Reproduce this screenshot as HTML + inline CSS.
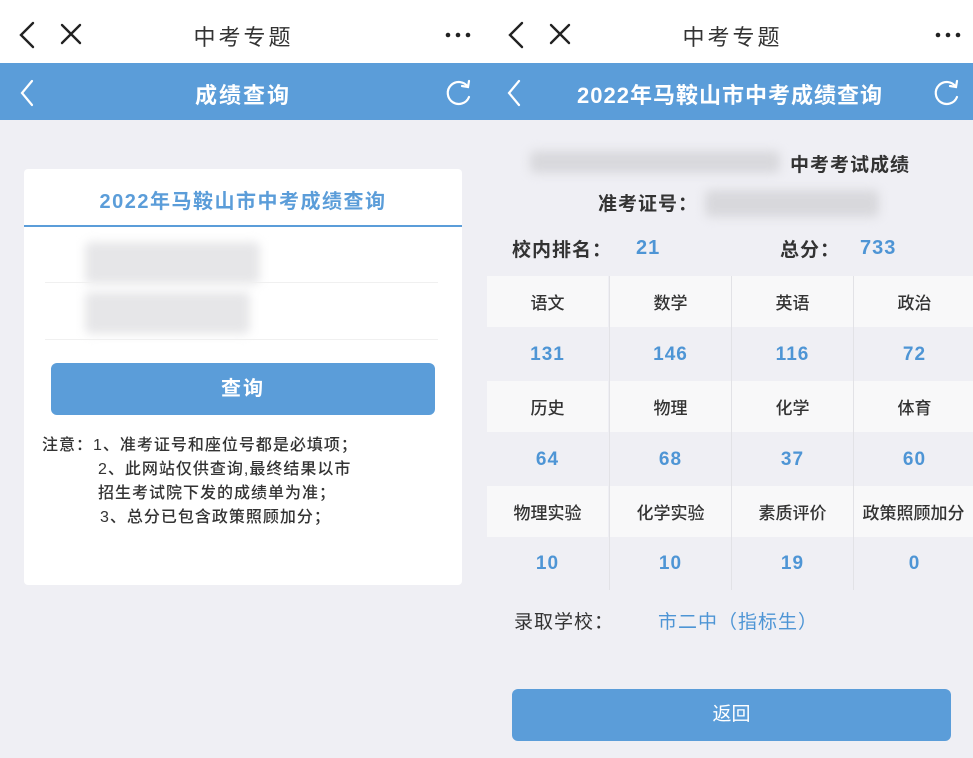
<!DOCTYPE html>
<html><head><meta charset="utf-8"><style>
*{margin:0;padding:0;box-sizing:border-box}
body{width:973px;height:758px;position:relative;overflow:hidden;background:#efeff4;font-family:"Liberation Sans","Noto Sans CJK SC",sans-serif}
.a{position:absolute;white-space:nowrap}
.nav{position:absolute;top:0;height:63px;background:#fff}
.bar{position:absolute;top:63px;height:57px;background:#5b9dd9}
.c{text-align:center}
.blur{position:absolute;background:#d8d8dc;filter:blur(5px);border-radius:6px}
.cell{position:absolute;width:121px;height:51px;display:flex;align-items:center;justify-content:center;font-size:17px;color:#333;font-weight:500}
.h{background:#f8f8f9}
.v{color:#4e95d5;font-weight:bold;font-size:19px;letter-spacing:1px}
</style></head><body>
<div class="nav" style="left:0;width:487px"></div>
<div class="nav" style="left:487px;width:486px"></div>
<svg class="a" style="left:0;top:0" width="973" height="120">
<g stroke="#222" stroke-width="2.4" fill="none" stroke-linecap="round">
<path d="M33 23 L21 35 L33 47"/><path d="M62 25 L80 43 M80 25 L62 43"/>
<path d="M522 23 L510 35 L522 47"/><path d="M551 25 L569 43 M569 25 L551 43"/>
</g>
<g fill="#222"><circle cx="448" cy="35" r="2.3"/><circle cx="458" cy="35" r="2.3"/><circle cx="468" cy="35" r="2.3"/>
<circle cx="938" cy="35" r="2.3"/><circle cx="948" cy="35" r="2.3"/><circle cx="958" cy="35" r="2.3"/></g>
</svg>
<div class="a c" style="left:142px;width:200px;top:20px;font-size:22px;color:#333;letter-spacing:3px;padding-left:3px">中考专题</div>
<div class="a c" style="left:631px;width:200px;top:20px;font-size:22px;color:#333;letter-spacing:3px;padding-left:3px">中考专题</div>
<div class="bar" style="left:0;width:487px"></div>
<div class="bar" style="left:487px;width:486px"></div>
<svg class="a" style="left:0;top:63px" width="973" height="57">
<g stroke="#fff" stroke-width="2.2" fill="none" stroke-linecap="round">
<path d="M32 18 L22 30 L32 42"/><path d="M519 18 L509 30 L519 42"/>
<path d="M468 24 A11 11 0 1 0 469 34"/><path d="M462 23 L468 24 L469 18"/>
<path d="M956 24 A11 11 0 1 0 957 34"/><path d="M950 23 L956 24 L957 18"/>
</g></svg>
<div class="a c" style="left:142px;width:200px;top:78px;font-size:22px;color:#fff;font-weight:bold;letter-spacing:2px;padding-left:2px">成绩查询</div>
<div class="a c" style="left:530px;width:400px;top:78px;font-size:22px;color:#fff;font-weight:bold;letter-spacing:1px">2022年马鞍山市中考成绩查询</div>

<div class="a" style="left:24px;top:169px;width:438px;height:416px;background:#fff;border-radius:4px"></div>
<div class="a c" style="left:24px;width:438px;top:185px;font-size:20px;color:#5b9dd9;font-weight:bold;letter-spacing:1.5px">2022年马鞍山市中考成绩查询</div>
<div class="a" style="left:24px;top:225px;width:438px;height:2px;background:#5b9dd9"></div>
<div class="blur" style="left:85px;top:242px;width:175px;height:42px;background:#e6e6e8"></div>
<div class="blur" style="left:85px;top:292px;width:165px;height:42px;background:#e6e6e8"></div>
<div class="a" style="left:45px;top:282px;width:393px;height:1px;background:#f0f0f0"></div>
<div class="a" style="left:45px;top:339px;width:393px;height:1px;background:#f0f0f0"></div>
<div class="a c" style="left:51px;top:363px;width:384px;height:52px;background:#5b9dd9;border-radius:6px;color:#fff;font-size:20px;font-weight:bold;line-height:52px;letter-spacing:2px">查询</div>
<div class="a" style="left:42px;top:434px;font-size:16px;color:#333;line-height:24px;font-weight:500;letter-spacing:1px">注意：1、准考证号和座位号都是必填项；<br><span style="padding-left:56px">2、此网站仅供查询,最终结果以市</span><br><span style="padding-left:56px">招生考试院下发的成绩单为准；</span><br><span style="padding-left:58px">3、总分已包含政策照顾加分；</span></div>

<div class="blur" style="left:530px;top:151px;width:250px;height:22px"></div>
<div class="a" style="left:790px;top:150px;font-size:19px;color:#333;font-weight:bold;letter-spacing:1px">中考考试成绩</div>
<div class="a" style="left:598px;top:189px;font-size:19px;color:#333;font-weight:bold;letter-spacing:1px">准考证号：</div>
<div class="blur" style="left:705px;top:190px;width:174px;height:27px"></div>
<div class="a" style="left:512px;top:235px;font-size:19px;color:#333;font-weight:bold;letter-spacing:1px">校内排名：</div>
<div class="a" style="left:636px;top:237px;font-size:20px;color:#4e95d5;font-weight:bold;letter-spacing:1px">21</div>
<div class="a" style="left:780px;top:235px;font-size:19px;color:#333;font-weight:bold;letter-spacing:1px">总分：</div>
<div class="a" style="left:860px;top:237px;font-size:20px;color:#4e95d5;font-weight:bold;letter-spacing:1px">733</div>

<div class="cell h" style="left:487px;top:276px">语文</div><div class="cell h" style="left:610px;top:276px">数学</div><div class="cell h" style="left:732px;top:276px">英语</div><div class="cell h" style="left:854px;top:276px">政治</div>
<div class="cell v" style="left:487px;top:329px">131</div><div class="cell v" style="left:610px;top:329px">146</div><div class="cell v" style="left:732px;top:329px">116</div><div class="cell v" style="left:854px;top:329px">72</div>
<div class="cell h" style="left:487px;top:381px">历史</div><div class="cell h" style="left:610px;top:381px">物理</div><div class="cell h" style="left:732px;top:381px">化学</div><div class="cell h" style="left:854px;top:381px">体育</div>
<div class="cell v" style="left:487px;top:434px">64</div><div class="cell v" style="left:610px;top:434px">68</div><div class="cell v" style="left:732px;top:434px">37</div><div class="cell v" style="left:854px;top:434px">60</div>
<div class="cell h" style="left:487px;top:486px">物理实验</div><div class="cell h" style="left:610px;top:486px">化学实验</div><div class="cell h" style="left:732px;top:486px">素质评价</div><div class="cell h" style="left:854px;top:486px;width:119px">政策照顾加分</div>
<div class="cell v" style="left:487px;top:538px">10</div><div class="cell v" style="left:610px;top:538px">10</div><div class="cell v" style="left:732px;top:538px">19</div><div class="cell v" style="left:854px;top:538px">0</div>
<div class="a" style="left:609px;top:276px;width:1px;height:314px;background:#e2e2e6"></div>
<div class="a" style="left:731px;top:276px;width:1px;height:314px;background:#e2e2e6"></div>
<div class="a" style="left:853px;top:276px;width:1px;height:314px;background:#e2e2e6"></div>

<div class="a" style="left:514px;top:607px;font-size:19px;color:#333;letter-spacing:1px">录取学校：</div>
<div class="a" style="left:658px;top:607px;font-size:19px;color:#4e95d5;letter-spacing:1px">市二中（指标生）</div>
<div class="a c" style="left:512px;top:689px;width:439px;height:52px;background:#5b9dd9;border-radius:6px;color:#fff;font-size:19px;line-height:52px">返回</div>
</body></html>
